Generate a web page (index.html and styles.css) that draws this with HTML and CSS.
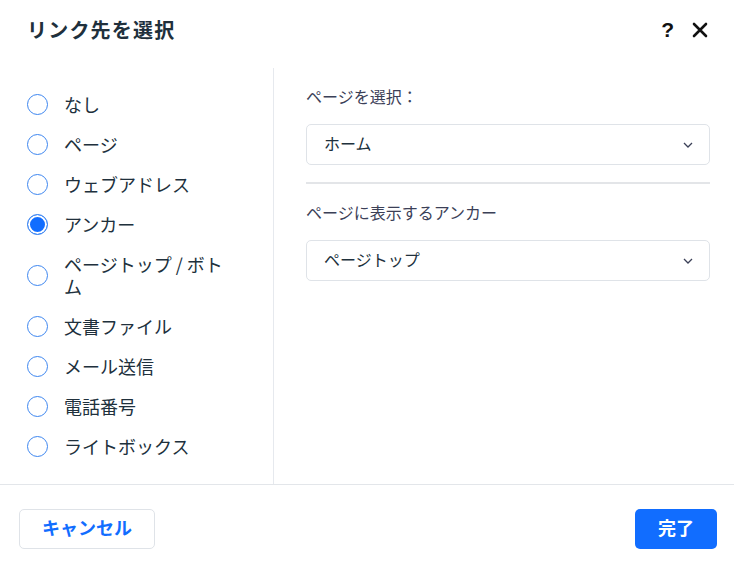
FILE: index.html
```html
<!DOCTYPE html>
<html lang="ja">
<head>
  <meta charset="UTF-8" />
  <meta name="viewport" content="width=device-width, initial-scale=1" />
  <title>リンク先を選択</title>
  <link rel="stylesheet" href="styles.css">
</head>
<body>

  <div class="dialog">
    <header class="dialog-header">
      <h1 class="title">リンク先を選択</h1>
      <div class="header-actions">
        <span class="help">?</span>
        <svg class="close" width="16" height="16" viewBox="0 0 16 16">
          <path d="M2 2 L14 14 M14 2 L2 14" stroke="#111" stroke-width="2.6" stroke-linecap="round" fill="none" />
        </svg>
      </div>
    </header>

    <div class="dialog-body">
      <ul class="options">
        <li class="option"><span class="radio"></span><span class="option-label">なし</span></li>
        <li class="option"><span class="radio"></span><span class="option-label">ページ</span></li>
        <li class="option"><span class="radio"></span><span class="option-label">ウェブアドレス</span></li>
        <li class="option"><span class="radio checked"></span><span class="option-label">アンカー</span></li>
        <li class="option"><span class="radio"></span><span class="option-label">ページトップ / ボトム</span></li>
        <li class="option"><span class="radio"></span><span class="option-label">文書ファイル</span></li>
        <li class="option"><span class="radio"></span><span class="option-label">メール送信</span></li>
        <li class="option"><span class="radio"></span><span class="option-label">電話番号</span></li>
        <li class="option"><span class="radio"></span><span class="option-label">ライトボックス</span></li>
      </ul>

      <div class="settings">
        <div class="field-label">ページを選択：</div>
        <div class="select">
          <span class="select-value">ホーム</span>
          <svg width="10" height="6" viewBox="0 0 10 6"><path d="M1 1 L5 5 L9 1" stroke="#3b4057" stroke-width="1.3" fill="none" /></svg>
        </div>
        <div class="separator"></div>
        <div class="field-label">ページに表示するアンカー</div>
        <div class="select">
          <span class="select-value">ページトップ</span>
          <svg width="10" height="6" viewBox="0 0 10 6"><path d="M1 1 L5 5 L9 1" stroke="#3b4057" stroke-width="1.3" fill="none" /></svg>
        </div>
      </div>
    </div>

    <footer class="dialog-footer">
      <button class="btn btn-secondary">キャンセル</button>
      <button class="btn btn-primary">完了</button>
    </footer>
  </div>

</body>
</html>
```

FILE: styles.css
```css
body {
  margin: 0;
  background: #fff;
  font-family: "Noto Sans CJK JP", "Noto Sans", sans-serif;
  color: #20303c;
}
.dialog {
  width: 734px;
  height: 572px;
  display: flex;
  flex-direction: column;
}
.dialog-header {
  height: 68px;
  display: flex;
  align-items: center;
  justify-content: space-between;
  padding: 0 26px 10px 27px;
  box-sizing: border-box;
}
.title {
  margin: 0;
  font-size: 20px;
  font-weight: 700;
  color: #20303c;
  letter-spacing: 1.2px;
}
.header-actions {
  display: flex;
  align-items: center;
  gap: 18px;
  padding-top: 1px;
}
.help {
  font-family: "Liberation Sans", Arial, sans-serif;
  font-weight: 700;
  font-size: 21px;
  color: #111;
  line-height: 1;
}
.close {
  display: block;
}
.dialog-body {
  height: 416px;
  display: grid;
  grid-template-columns: 274px 1fr;
}
.options {
  list-style: none;
  margin: 0;
  padding: 16px 0 0 27px;
  border-right: 1px solid #e6e9ee;
}
.option {
  display: flex;
  align-items: center;
  min-height: 40px;
  padding: 9px 0;
  box-sizing: border-box;
}
.radio {
  flex: none;
  width: 21px;
  height: 21px;
  border: 1.5px solid #3d86f0;
  border-radius: 50%;
  box-sizing: border-box;
  margin-right: 16px;
}
.radio.checked {
  background: #116dff;
  box-shadow: inset 0 0 0 2px #fff;
}
.option-label {
  font-size: 18px;
  line-height: 22px;
  color: #20303c;
  max-width: 172px;
}
.settings {
  padding: 17px 24px 0 32px;
}
.field-label {
  font-size: 16px;
  line-height: 22px;
  color: #3b4057;
  margin-bottom: 17px;
}
.select {
  height: 41px;
  border: 1px solid #dfe3e8;
  border-radius: 5px;
  box-sizing: border-box;
  display: flex;
  align-items: center;
  justify-content: space-between;
  padding: 0 16px 0 17px;
  font-size: 16px;
  color: #20303c;
}
.select-value {
  padding-bottom: 3px;
}
.separator {
  height: 2px;
  background: #e3e5e8;
  margin: 17px 0 17px;
}
.dialog-footer {
  border-top: 1px solid #e3e6ea;
  display: flex;
  justify-content: space-between;
  align-items: flex-start;
  padding: 24px 17px 0 19px;
}
.btn {
  font-family: "Noto Sans CJK JP", "Noto Sans", sans-serif;
  font-size: 18px;
  font-weight: 700;
  height: 40px;
  padding: 0 0 4px;
  border-radius: 5px;
  cursor: pointer;
}
.btn-secondary {
  width: 136px;
  background: #fff;
  color: #116dff;
  border: 1px solid #dfe3e8;
}
.btn-primary {
  width: 82px;
  background: #116dff;
  color: #fff;
  border: none;
}
```
